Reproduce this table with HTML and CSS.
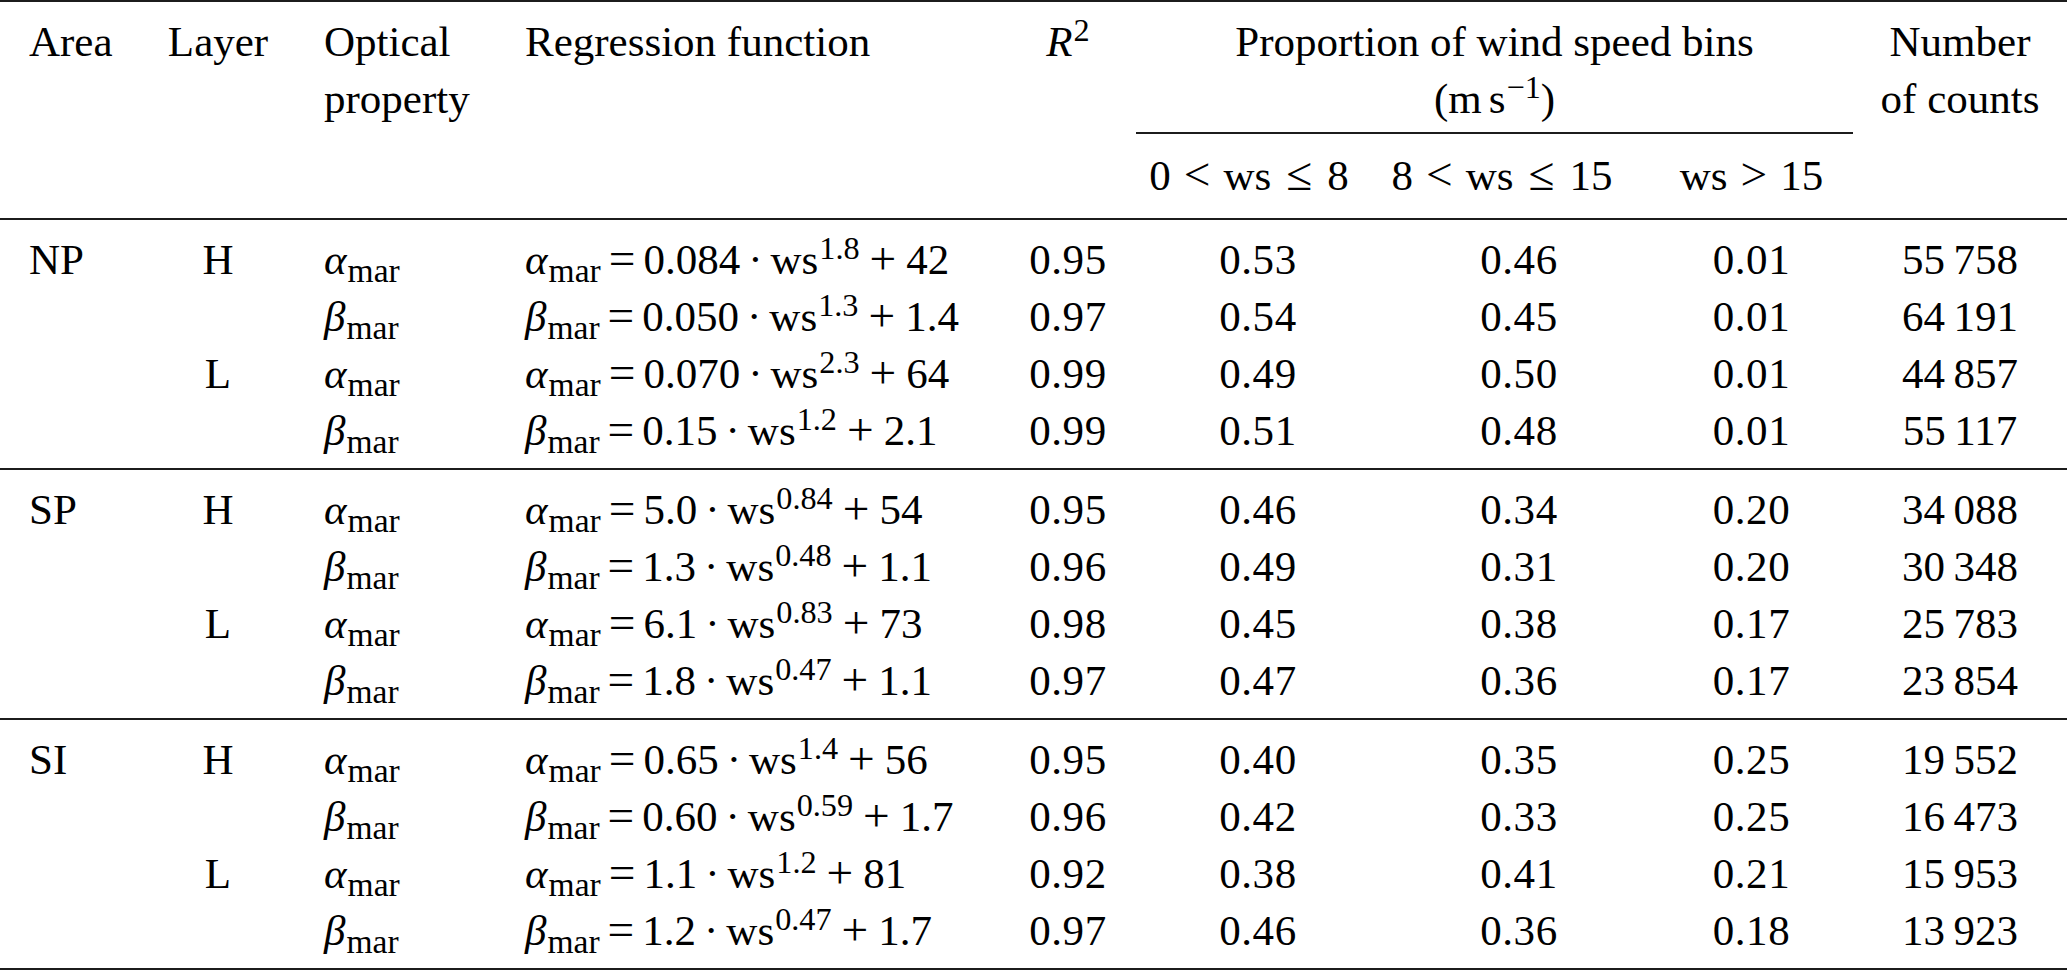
FILE: index.html
```html
<!DOCTYPE html>
<html>
<head>
<meta charset="utf-8">
<title>Regression table</title>
<link rel="stylesheet" href="styles.css">
</head>
<body>
<table class="tbl">
  <colgroup>
    <col class="w-area"><col class="w-layer"><col class="w-opt"><col class="w-reg"><col class="w-r2">
    <col class="w-b1"><col class="w-b2"><col class="w-b3"><col class="w-num">
  </colgroup>
  <thead>
    <tr class="hrow-a">
      <th class="h-left h-area">Area</th>
      <th class="h-center">Layer</th>
      <th class="h-left h-opt">Optical<br>property</th>
      <th class="h-left h-reg">Regression function</th>
      <th class="h-center"><i>R</i><sup>2</sup></th>
      <th class="h-center h-span" colspan="3">Proportion of wind speed bins<br>(m<span class="thin"></span>s<sup>−1</sup>)</th>
      <th class="h-center">Number<br>of counts</th>
    </tr>
    <tr class="hrow-b">
      <th></th><th></th><th></th><th></th><th></th>
      <th class="h-center h-b1">0<span class="rel">&lt;</span>ws<span class="rel-le">≤</span>8</th>
      <th class="h-center h-b2">8<span class="rel">&lt;</span>ws<span class="rel-le">≤</span>15</th>
      <th class="h-center">ws<span class="rel">&gt;</span>15</th>
      <th></th>
    </tr>
  </thead>
  <tbody class="grp grp-first">
    <tr><td>NP</td><td>H</td><td><i>α</i><sub>mar</sub></td><td><i>α</i><sub>mar</sub><span class="op">=</span>0.084<span class="dot">·</span>ws<sup>1.8</sup><span class="bin">+</span>42</td><td>0.95</td><td>0.53</td><td>0.46</td><td>0.01</td><td>55&#8201;758</td></tr>
    <tr><td></td><td></td><td><i>β</i><sub>mar</sub></td><td><i>β</i><sub>mar</sub><span class="op">=</span>0.050<span class="dot">·</span>ws<sup>1.3</sup><span class="bin">+</span>1.4</td><td>0.97</td><td>0.54</td><td>0.45</td><td>0.01</td><td>64&#8201;191</td></tr>
    <tr><td></td><td>L</td><td><i>α</i><sub>mar</sub></td><td><i>α</i><sub>mar</sub><span class="op">=</span>0.070<span class="dot">·</span>ws<sup>2.3</sup><span class="bin">+</span>64</td><td>0.99</td><td>0.49</td><td>0.50</td><td>0.01</td><td>44&#8201;857</td></tr>
    <tr><td></td><td></td><td><i>β</i><sub>mar</sub></td><td><i>β</i><sub>mar</sub><span class="op">=</span>0.15<span class="dot">·</span>ws<sup>1.2</sup><span class="bin">+</span>2.1</td><td>0.99</td><td>0.51</td><td>0.48</td><td>0.01</td><td>55&#8201;117</td></tr>
  </tbody>
  <tbody class="grp">
    <tr><td>SP</td><td>H</td><td><i>α</i><sub>mar</sub></td><td><i>α</i><sub>mar</sub><span class="op">=</span>5.0<span class="dot">·</span>ws<sup>0.84</sup><span class="bin">+</span>54</td><td>0.95</td><td>0.46</td><td>0.34</td><td>0.20</td><td>34&#8201;088</td></tr>
    <tr><td></td><td></td><td><i>β</i><sub>mar</sub></td><td><i>β</i><sub>mar</sub><span class="op">=</span>1.3<span class="dot">·</span>ws<sup>0.48</sup><span class="bin">+</span>1.1</td><td>0.96</td><td>0.49</td><td>0.31</td><td>0.20</td><td>30&#8201;348</td></tr>
    <tr><td></td><td>L</td><td><i>α</i><sub>mar</sub></td><td><i>α</i><sub>mar</sub><span class="op">=</span>6.1<span class="dot">·</span>ws<sup>0.83</sup><span class="bin">+</span>73</td><td>0.98</td><td>0.45</td><td>0.38</td><td>0.17</td><td>25&#8201;783</td></tr>
    <tr><td></td><td></td><td><i>β</i><sub>mar</sub></td><td><i>β</i><sub>mar</sub><span class="op">=</span>1.8<span class="dot">·</span>ws<sup>0.47</sup><span class="bin">+</span>1.1</td><td>0.97</td><td>0.47</td><td>0.36</td><td>0.17</td><td>23&#8201;854</td></tr>
  </tbody>
  <tbody class="grp grp-last">
    <tr><td>SI</td><td>H</td><td><i>α</i><sub>mar</sub></td><td><i>α</i><sub>mar</sub><span class="op">=</span>0.65<span class="dot">·</span>ws<sup>1.4</sup><span class="bin">+</span>56</td><td>0.95</td><td>0.40</td><td>0.35</td><td>0.25</td><td>19&#8201;552</td></tr>
    <tr><td></td><td></td><td><i>β</i><sub>mar</sub></td><td><i>β</i><sub>mar</sub><span class="op">=</span>0.60<span class="dot">·</span>ws<sup>0.59</sup><span class="bin">+</span>1.7</td><td>0.96</td><td>0.42</td><td>0.33</td><td>0.25</td><td>16&#8201;473</td></tr>
    <tr><td></td><td>L</td><td><i>α</i><sub>mar</sub></td><td><i>α</i><sub>mar</sub><span class="op">=</span>1.1<span class="dot">·</span>ws<sup>1.2</sup><span class="bin">+</span>81</td><td>0.92</td><td>0.38</td><td>0.41</td><td>0.21</td><td>15&#8201;953</td></tr>
    <tr><td></td><td></td><td><i>β</i><sub>mar</sub></td><td><i>β</i><sub>mar</sub><span class="op">=</span>1.2<span class="dot">·</span>ws<sup>0.47</sup><span class="bin">+</span>1.7</td><td>0.97</td><td>0.46</td><td>0.36</td><td>0.18</td><td>13&#8201;923</td></tr>
  </tbody>
</table>
</body>
</html>
```
FILE: styles.css
```css
html, body {
  margin: 0;
  padding: 0;
  background: #ffffff;
}

body {
  font-family: "Liberation Serif", "Times New Roman", serif;
  font-size: 43px;
  color: #000000;
}

.tbl {
  border-collapse: separate;
  border-spacing: 0;
  table-layout: fixed;
  width: 2067px;
}

.w-area { width: 140px; }
.w-layer { width: 156px; }
.w-opt { width: 204px; }
.w-reg { width: 500px; }
.w-r2 { width: 136px; }
.w-b1 { width: 238px; }
.w-b2 { width: 276px; }
.w-b3 { width: 203px; }
.w-num { width: 214px; }

.tbl th,
.tbl td {
  padding: 0;
  line-height: 57px;
  vertical-align: top;
  font-weight: normal;
  white-space: nowrap;
}

/* header */
.tbl .hrow-a th {
  border-top: 2px solid #1c1c1c;
  padding-top: 11px;
}

.tbl .hrow-a .h-span {
  border-bottom: 2px solid #1c1c1c;
  padding-bottom: 5px;
}

.tbl .hrow-b th {
  padding-top: 13px;
  padding-bottom: 14px;
  border-bottom: 2px solid #1c1c1c;
}

.tbl .h-left { text-align: left; }
.tbl .h-center { text-align: center; }
.tbl .h-area { padding-left: 29px; }
.tbl .h-opt { padding-left: 28px; }
.tbl .h-reg { padding-left: 25px; }
.tbl .hrow-b .h-b1 { padding-right: 12px; }
.tbl .hrow-b .h-b2 { padding-right: 20px; }

/* body columns */
.grp td:nth-child(1) { padding-left: 29px; text-align: left; }
.grp td:nth-child(2) { text-align: center; }
.grp td:nth-child(3) { padding-left: 28px; text-align: left; }
.grp td:nth-child(4) { padding-left: 25px; text-align: left; }
.grp td:nth-child(n+5) { text-align: center; }
.grp td:nth-child(n+5):nth-child(-n+8) { letter-spacing: 0.6px; }
.grp td:nth-child(6) { padding-left: 6px; }
.grp td:nth-child(7) { padding-left: 14px; }

.grp tr:first-child td { padding-top: 11px; }
.grp tr:last-child td { padding-bottom: 9px; }
.grp + .grp tr:first-child td { border-top: 2px solid #1c1c1c; }
.grp-last tr:last-child td { border-bottom: 2px solid #1c1c1c; }

/* math */
sub {
  font-size: 0.78em;
  line-height: 0;
  vertical-align: -8px;
  margin-left: 1px;
}

sup {
  font-size: 0.75em;
  line-height: 0;
  vertical-align: 15px;
  margin-left: 1px;
}

.op,
.bin,
.rel,
.rel-le {
  font-size: 1.1em;
  line-height: 0;
}

.op { margin: 0 8px; }
.dot { margin: 0 8px; }
.bin { margin: 0 10px; }
.rel { margin: 0 13px; }
.rel-le { margin: 0 15px; }
.thin { display: inline-block; width: 7px; }
```
